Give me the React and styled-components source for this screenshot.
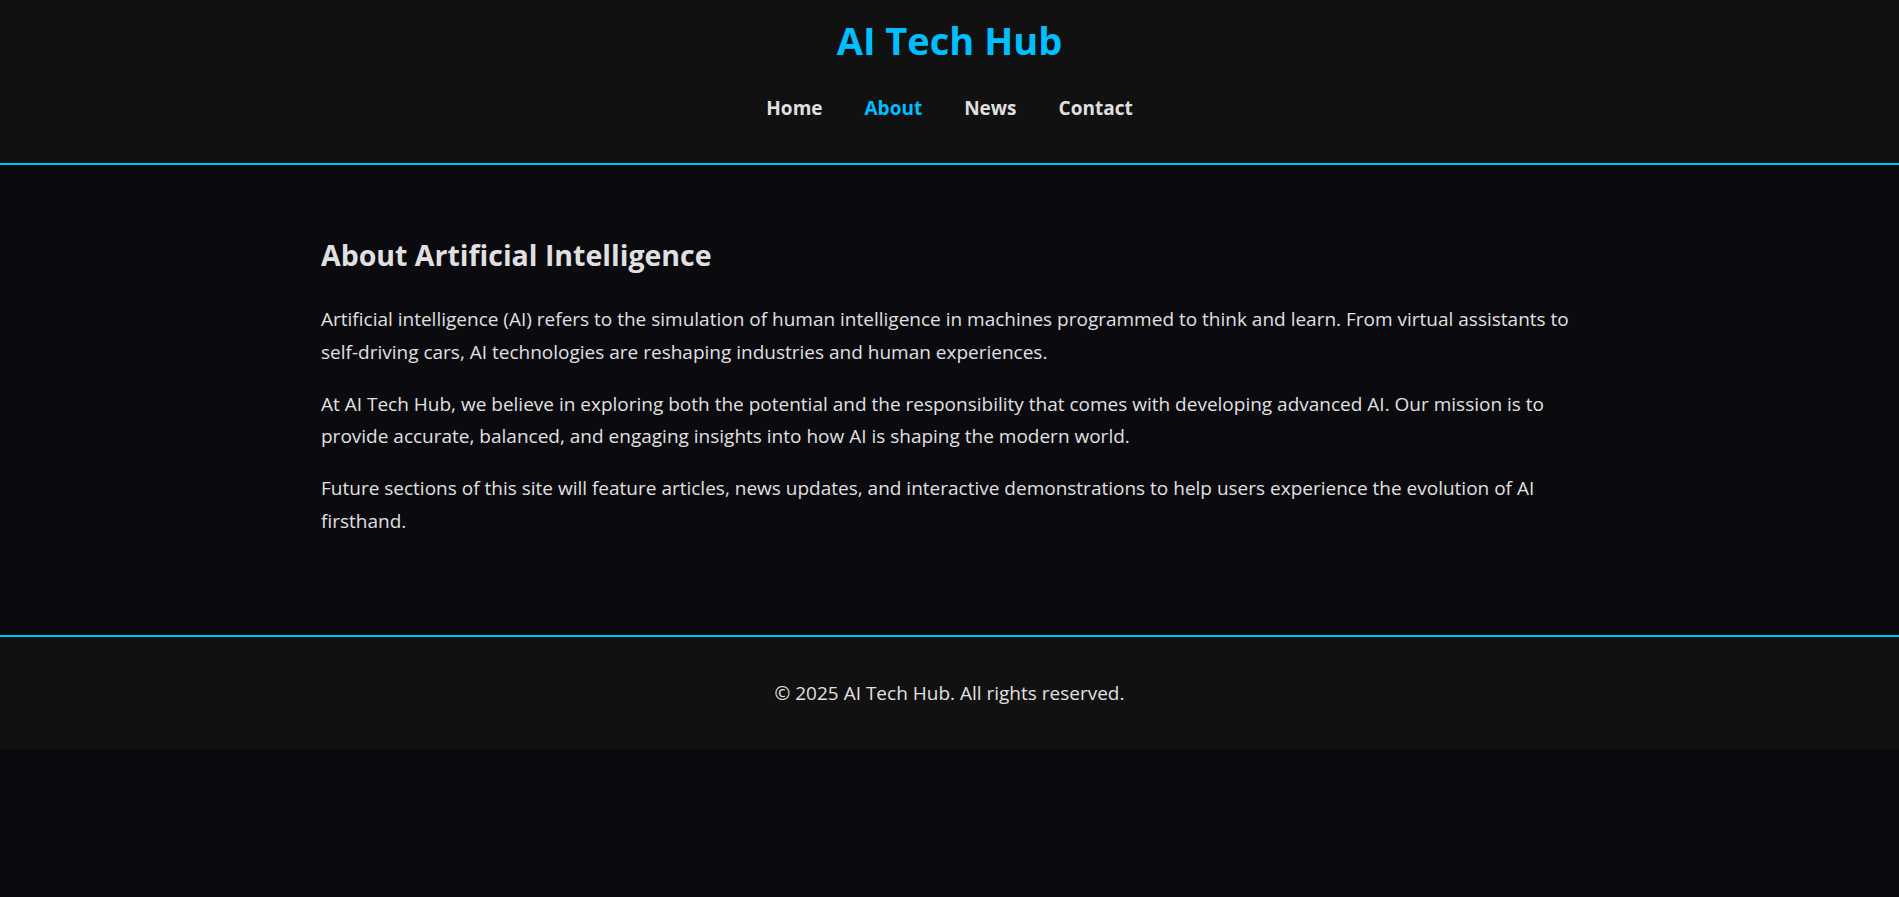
import React from 'react';
import styled, { createGlobalStyle } from 'styled-components';

const GlobalStyle = createGlobalStyle`
  * {
    box-sizing: border-box;
  }
  body {
    margin: 0;
    background: #0a0a0f;
    color: #e0e0e0;
    font-family: 'Segoe UI', 'Open Sans', 'Liberation Sans', sans-serif;
    line-height: 1.8;
  }
`;

const Header = styled.header`
  background: #111111;
  border-bottom: 2px solid #00bfff;
  padding: 16px 0 39px;
  text-align: center;
`;

const Title = styled.h1`
  margin: 0 0 28px;
  color: #00bfff;
  font-size: 38px;
  font-weight: 700;
  line-height: 48px;
`;

const Nav = styled.nav`
  display: flex;
  justify-content: center;
  gap: 42px;
`;

const NavLink = styled.a`
  color: ${(props) => (props.$active ? '#00bfff' : '#e0e0e0')};
  font-size: 19px;
  font-weight: 700;
  line-height: 32px;
  text-decoration: none;
`;

const Main = styled.main`
  max-width: 1257px;
  margin: 0 auto;
  padding: 73px 0 78px;
`;

const Heading = styled.h2`
  margin: 0 0 31px;
  font-size: 28.5px;
  font-weight: 700;
  line-height: 34px;
`;

const Paragraph = styled.p`
  margin: 0 0 19px;
  font-size: 19px;
  line-height: 32.8px;
`;

const Footer = styled.footer`
  background: #111111;
  border-top: 2px solid #00bfff;
  padding: 40px 0 40px;
  text-align: center;
  font-size: 19px;
  line-height: 32.4px;
`;

const links = ['Home', 'About', 'News', 'Contact'];

export default function App() {
  return (
    <>
      <GlobalStyle />
      <Header>
        <Title>AI Tech Hub</Title>
        <Nav>
          {links.map((link) => (
            <NavLink key={link} href="#" $active={link === 'About'}>
              {link}
            </NavLink>
          ))}
        </Nav>
      </Header>
      <Main>
        <Heading>About Artificial Intelligence</Heading>
        <Paragraph>
          Artificial intelligence (AI) refers to the simulation of human intelligence in machines
          programmed to think and learn. From virtual assistants to self-driving cars, AI
          technologies are reshaping industries and human experiences.
        </Paragraph>
        <Paragraph>
          At AI Tech Hub, we believe in exploring both the potential and the responsibility that
          comes with developing advanced AI. Our mission is to provide accurate, balanced, and
          engaging insights into how AI is shaping the modern world.
        </Paragraph>
        <Paragraph>
          Future sections of this site will feature articles, news updates, and interactive
          demonstrations to help users experience the evolution of AI firsthand.
        </Paragraph>
      </Main>
      <Footer>© 2025 AI Tech Hub. All rights reserved.</Footer>
    </>
  );
}
